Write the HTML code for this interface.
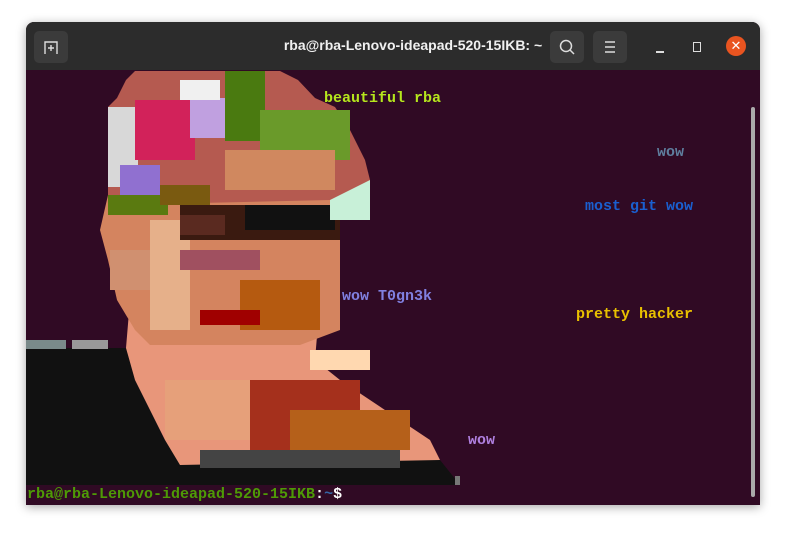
<!DOCTYPE html>
<html><head><style>
body{margin:0;width:786px;height:533px;background:#fff;overflow:hidden;position:relative;font-family:"Liberation Sans",sans-serif}
.win{position:absolute;left:26px;top:22px;width:734px;height:483px;background:#300a24;border-radius:8px 8px 0 0;box-shadow:0 2px 10px rgba(0,0,0,.35);overflow:hidden}
.tb{position:absolute;left:0;top:0;width:734px;height:48px;background:#2c2c2c}
.btn{position:absolute;top:9px;width:34px;height:32px;background:#3b3b3b;border-radius:5px}
.title{position:absolute;left:0;width:734px;top:15px;text-align:center;color:#f0f0f0;font-weight:bold;font-size:14px;padding-left:40px;box-sizing:border-box}
.t{position:absolute;font-family:"Liberation Mono",monospace;font-weight:bold;font-size:15px;line-height:18px;white-space:pre}
</style></head><body>
<div class="win">
<div class="tb">
 <div class="btn" style="left:8px"><svg width="34" height="32"><path d="M11 23V11h12v12M17 14v6M14 17h6" stroke="#ddd" stroke-width="1.4" fill="none"/></svg></div>
 <div class="title">rba@rba-Lenovo-ideapad-520-15IKB: ~</div>
 <div class="btn" style="left:524px"><svg width="34" height="32"><circle cx="16" cy="15" r="5.5" stroke="#ddd" stroke-width="1.5" fill="none"/><path d="M20 19l4 4" stroke="#ddd" stroke-width="1.5"/></svg></div>
 <div class="btn" style="left:567px"><svg width="34" height="32"><path d="M12 11h10M12 16h10M12 21h10" stroke="#ddd" stroke-width="1.4"/></svg></div>
 <div style="position:absolute;left:630px;top:29px;width:8px;height:1.5px;background:#ddd"></div>
 <div style="position:absolute;left:667px;top:20px;width:6px;height:8px;border:1.5px solid #ddd"></div>
 <div style="position:absolute;left:700px;top:14px;width:20px;height:20px;border-radius:50%;background:#e95420;color:#fff;font-size:13px;text-align:center;line-height:20px">✕</div>
</div>
<svg style="position:absolute;left:-26px;top:-22px" width="786" height="533">
 <!-- black shirt -->
 <polygon points="26,348 126,348 135,380 150,410 165,440 180,460 440,460 460,485 26,485" fill="#111"/>
 <rect x="26" y="340" width="40" height="9" fill="#7a8a8a"/><rect x="72" y="340" width="36" height="9" fill="#999"/>
 <!-- neck/shoulder -->
 <polygon points="130,300 320,300 315,360 340,380 370,400 400,420 430,440 440,460 180,465 165,440 150,410 135,380 126,348" fill="#e8967a"/>
 <rect x="250" y="380" width="110" height="70" fill="#a5301c"/>
 <rect x="290" y="410" width="120" height="40" fill="#b5601a"/>
 <rect x="200" y="450" width="200" height="18" fill="#444"/>
 <rect x="165" y="380" width="85" height="60" fill="#e6a07a"/>
 <rect x="310" y="350" width="60" height="20" fill="#ffd8b0"/>
 <!-- face -->
 <polygon points="108,195 340,195 340,330 300,345 240,345 150,345 135,330 117,300 108,260 100,230" fill="#d4845f"/>
 <rect x="150" y="220" width="40" height="110" fill="#e6b08a"/>
 <rect x="110" y="250" width="40" height="40" fill="#d09070"/>
 <rect x="240" y="280" width="80" height="50" fill="#b55a10"/>
 <rect x="200" y="310" width="60" height="15" fill="#a00000"/>
 <rect x="180" y="250" width="80" height="20" fill="#a05060"/>
 <!-- glasses -->
 <rect x="180" y="205" width="160" height="35" fill="#3a1a10"/>
 <rect x="245" y="205" width="90" height="25" fill="#111"/>
 <rect x="180" y="215" width="45" height="20" fill="#5a2a20"/>
 <rect x="330" y="180" width="40" height="40" fill="#c8f0d8"/>
 <!-- hair -->
 <polygon points="135,71 280,71 298,80 315,98 335,107 350,130 365,160 370,180 330,200 108,205 108,107 117,98 126,80" fill="#b55a50"/>
 <rect x="108" y="107" width="30" height="80" fill="#d8d8d8"/>
 <rect x="135" y="100" width="60" height="60" fill="#d2225a"/>
 <rect x="190" y="98" width="40" height="40" fill="#c0a0e0"/>
 <rect x="225" y="71" width="40" height="70" fill="#4a7a10"/>
 <rect x="260" y="110" width="90" height="50" fill="#6a9a2a"/>
 <rect x="225" y="150" width="110" height="40" fill="#d0885f"/>
 <rect x="120" y="165" width="40" height="35" fill="#9070d0"/>
 <rect x="108" y="195" width="60" height="20" fill="#5a7a10"/>
 <rect x="160" y="185" width="50" height="20" fill="#7a5a10"/>
 <rect x="180" y="80" width="40" height="20" fill="#f0f0f0"/>
 <rect x="455" y="476" width="5" height="9" fill="#777"/>
</svg>
<div style="position:absolute;left:725px;top:85px;width:4px;height:390px;background:#aaa;border-radius:2px"></div>
</div>
<div class="t" style="left:324px;top:90px;color:#b5e61d">beautiful rba</div>
<div class="t" style="left:657px;top:144px;color:#5f7f9f">wow</div>
<div class="t" style="left:585px;top:198px;color:#1a5fd0">most git wow</div>
<div class="t" style="left:342px;top:288px;color:#8080e0">wow T0gn3k</div>
<div class="t" style="left:576px;top:306px;color:#e8c000">pretty hacker</div>
<div class="t" style="left:468px;top:432px;color:#b080e0">wow</div>
<div class="t" style="left:27px;top:486px;color:#4e9a06">rba@rba-Lenovo-ideapad-520-15IKB<span style="color:#fff">:</span><span style="color:#3465a4">~</span><span style="color:#fff">$</span></div>
</body></html>
